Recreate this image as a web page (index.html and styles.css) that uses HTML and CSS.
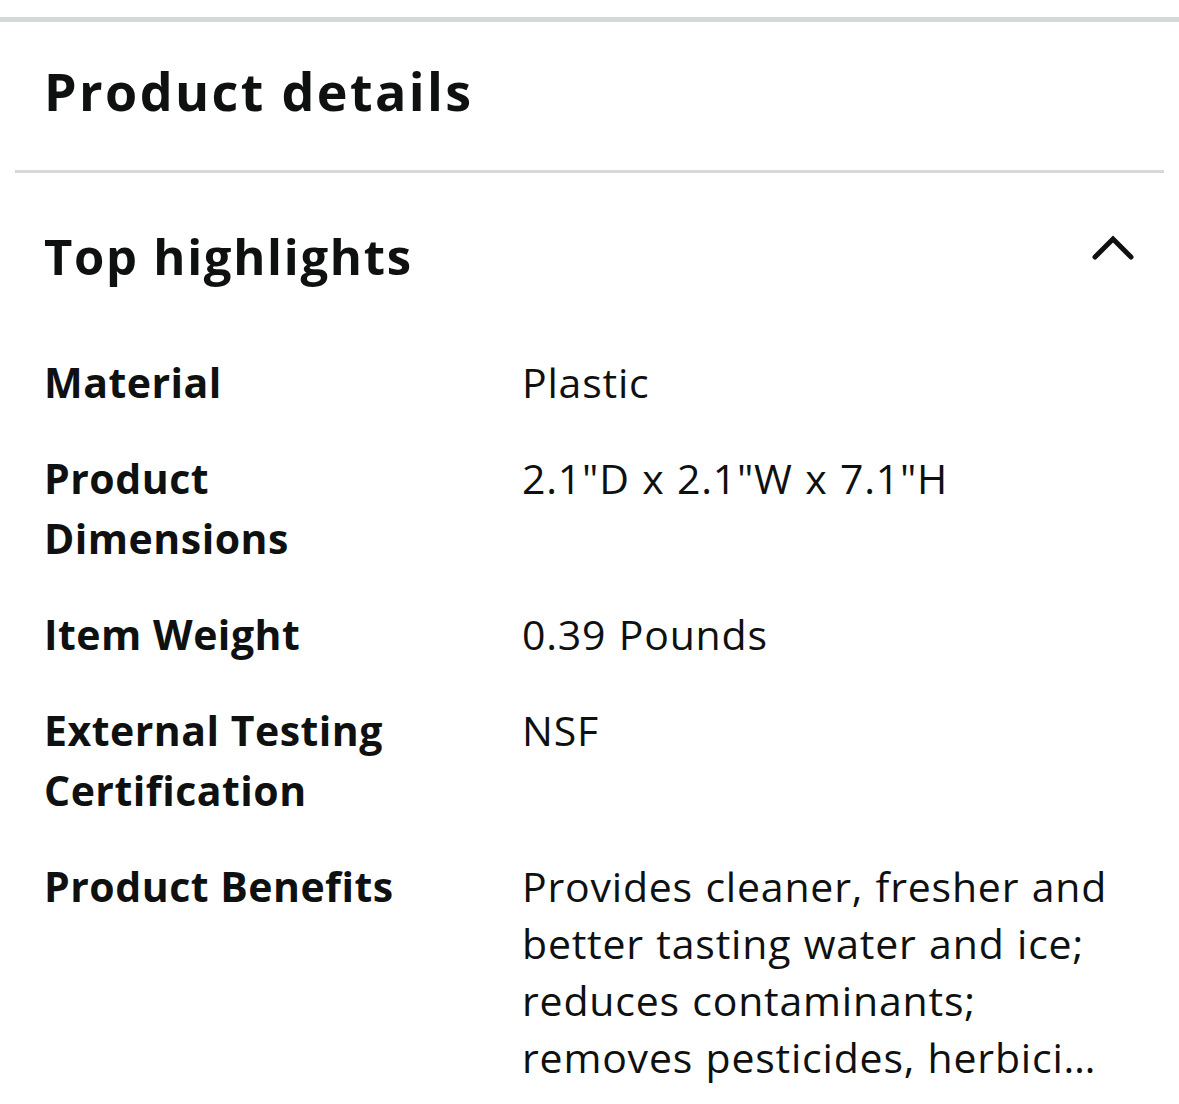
FILE: index.html
```html
<!DOCTYPE html>
<html lang="en">
<head>
    <meta charset="UTF-8">
    <meta name="viewport" content="width=device-width, initial-scale=1.0">
    <title>Product details</title>
    <link rel="stylesheet" href="styles.css">
</head>
<body>
    <div class="top-rule"></div>
    <h1 class="page-title">Product details</h1>
    <div class="divider"></div>
    <section class="highlights">
        <div class="highlights-header">
            <h2>Top highlights</h2>
            <svg class="chevron" width="44" height="28" viewBox="0 0 44 28">
                <polyline points="4,23 22,5 40,23" fill="none" stroke="#0f1111" stroke-width="5" stroke-linecap="round"/>
            </svg>
        </div>
        <div class="details-grid">
            <div class="label">Material</div>
            <div class="value">Plastic</div>

            <div class="label">Product Dimensions</div>
            <div class="value">2.1"D x 2.1"W x 7.1"H</div>

            <div class="label">Item Weight</div>
            <div class="value">0.39 Pounds</div>

            <div class="label">External Testing Certification</div>
            <div class="value">NSF</div>

            <div class="label">Product Benefits</div>
            <div class="value clamp">Provides cleaner, fresher and better tasting water and ice; reduces contaminants; removes pesticides, herbici…</div>
        </div>
    </section>
</body>
</html>
```

FILE: styles.css
```css
body {
    margin: 0;
    background-color: #fff;
    color: #0f1111;
    font-family: "Open Sans", "Noto Sans", sans-serif;
}
.top-rule {
    margin-top: 17px;
    height: 5px;
    background-color: #d5d9d9;
}
.page-title {
    margin: 0;
    padding: 39px 44px 49px;
    font-size: 52px;
    line-height: 60px;
    font-weight: 700;
    letter-spacing: 2.4px;
}
.divider {
    height: 3px;
    margin: 0 15px;
    background-color: #d5d9d9;
}
.highlights {
    padding: 53px 46px 0 44px;
}
.highlights-header {
    display: flex;
    justify-content: space-between;
    align-items: flex-start;
}
.highlights-header h2 {
    margin: 0;
    font-size: 49px;
    line-height: 60px;
    font-weight: 700;
    letter-spacing: 1.7px;
}
.chevron {
    margin-top: 8px;
    margin-right: -2px;
}
.details-grid {
    display: grid;
    grid-template-columns: 478px 1fr;
    row-gap: 36px;
    align-items: baseline;
    margin-top: 66px;
    font-size: 41px;
}
.label {
    font-weight: 700;
    line-height: 60px;
    padding-right: 70px;
    letter-spacing: 0.5px;
}
.value {
    line-height: 57px;
    letter-spacing: 0.8px;
    word-spacing: 1px;
}
.clamp {
    display: -webkit-box;
    -webkit-line-clamp: 4;
    -webkit-box-orient: vertical;
    overflow: hidden;
}
```
